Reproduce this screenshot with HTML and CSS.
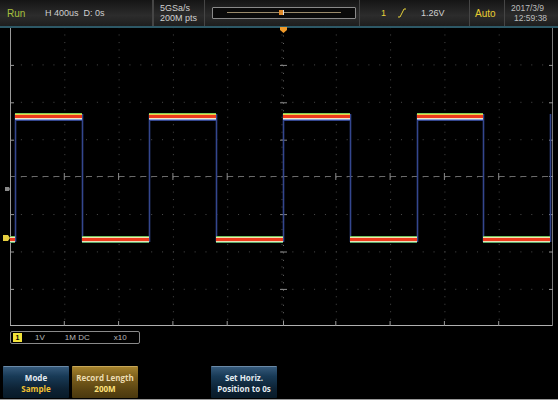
FILE: index.html
```html
<!DOCTYPE html>
<html>
<head>
<meta charset="utf-8">
<link rel="stylesheet" href="styles.css">
</head>
<body>
<div class="scope">
  <header class="topbar">
    <div class="cell run">Run</div>
    <div class="cell hdiv">H 400us&nbsp;&nbsp;D: 0s</div>
    <div class="cell rate"><span>5GSa/s</span><span>200M pts</span></div>
    <div class="cell nav">
      <div class="navbox">
        <div class="navline"></div>
        <div class="navmark"></div>
      </div>
    </div>
    <div class="cell trig">
      <span class="tch">1</span>
      <svg class="edge" width="10" height="10" viewBox="0 0 10 10"><path d="M1 9 H3 L7 1 H9" fill="none" stroke="#e6d23a" stroke-width="1"/></svg>
      <span class="tlvl">1.26V</span>
    </div>
    <div class="cell auto">Auto</div>
    <div class="cell date"><span>2017/3/9</span><span>12:59:38</span></div>
  </header>

  <div class="screen">
    <svg class="grid" width="558" height="301" viewBox="0 0 558 301">
      <defs>
        <pattern id="dots" x="10" y="1" width="10.86" height="37.4" patternUnits="userSpaceOnUse">
          <rect x="0" y="0" width="1" height="1" fill="#4a4a4a"/>
        </pattern>
        <pattern id="vdots" x="10" y="1" width="54.3" height="7.48" patternUnits="userSpaceOnUse">
          <rect x="0" y="0" width="1" height="1" fill="#4a4a4a"/>
        </pattern>
      </defs>
      <rect x="0" y="0" width="558" height="2" fill="#2d5866"/>
      <rect x="10" y="2" width="543" height="298" fill="url(#dots)"/>
      <rect x="10" y="2" width="543" height="298" fill="url(#vdots)"/>
      <!-- center horizontal -->
      <line x1="10" y1="150.5" x2="553" y2="150.5" stroke="#6a6a6a" stroke-width="1" stroke-dasharray="6 4.86"/>
      <g stroke="#8a8a8a" stroke-width="1">
        <line x1="64.3" y1="147" x2="64.3" y2="154"/>
        <line x1="118.6" y1="147" x2="118.6" y2="154"/>
        <line x1="172.9" y1="147" x2="172.9" y2="154"/>
        <line x1="227.2" y1="147" x2="227.2" y2="154"/>
        <line x1="335.8" y1="147" x2="335.8" y2="154"/>
        <line x1="390.1" y1="147" x2="390.1" y2="154"/>
        <line x1="444.4" y1="147" x2="444.4" y2="154"/>
        <line x1="498.7" y1="147" x2="498.7" y2="154"/>
      </g>
      <!-- center vertical -->
      <line x1="283.5" y1="2" x2="283.5" y2="300" stroke="#6a6a6a" stroke-width="1" stroke-dasharray="1 6.48"/>
      <g stroke="#8a8a8a" stroke-width="1">
        <line x1="280" y1="39.4" x2="287" y2="39.4"/>
        <line x1="280" y1="76.8" x2="287" y2="76.8"/>
        <line x1="280" y1="114.2" x2="287" y2="114.2"/>
        <line x1="280" y1="188.6" x2="287" y2="188.6"/>
        <line x1="280" y1="226" x2="287" y2="226"/>
        <line x1="280" y1="263.4" x2="287" y2="263.4"/>
      </g>
      <!-- border -->
      <line x1="10.5" y1="2" x2="10.5" y2="300" stroke="#9a9a9a"/>
      <line x1="10" y1="299.5" x2="553" y2="299.5" stroke="#b0b0b0"/>
      <line x1="552.5" y1="2" x2="552.5" y2="300" stroke="#7a7a7a"/>
      <g stroke="#9a9a9a">
        <line x1="64.3" y1="295" x2="64.3" y2="300"/>
        <line x1="118.6" y1="295" x2="118.6" y2="300"/>
        <line x1="172.9" y1="295" x2="172.9" y2="300"/>
        <line x1="227.2" y1="295" x2="227.2" y2="300"/>
        <line x1="283.5" y1="295" x2="283.5" y2="300"/>
        <line x1="335.8" y1="295" x2="335.8" y2="300"/>
        <line x1="390.1" y1="295" x2="390.1" y2="300"/>
        <line x1="444.4" y1="295" x2="444.4" y2="300"/>
        <line x1="498.7" y1="295" x2="498.7" y2="300"/>
        <line x1="10" y1="39.4" x2="14" y2="39.4"/>
        <line x1="10" y1="76.8" x2="14" y2="76.8"/>
        <line x1="10" y1="114.2" x2="14" y2="114.2"/>
        <line x1="10" y1="188.6" x2="14" y2="188.6"/>
        <line x1="10" y1="226" x2="14" y2="226"/>
        <line x1="10" y1="263.4" x2="14" y2="263.4"/>
        <line x1="549" y1="39.4" x2="553" y2="39.4"/>
        <line x1="549" y1="76.8" x2="553" y2="76.8"/>
        <line x1="549" y1="114.2" x2="553" y2="114.2"/>
        <line x1="549" y1="150.5" x2="553" y2="150.5"/>
        <line x1="549" y1="188.6" x2="553" y2="188.6"/>
        <line x1="549" y1="226" x2="553" y2="226"/>
        <line x1="549" y1="263.4" x2="553" y2="263.4"/>
      </g>

      <!-- vertical edges -->
      <g stroke="#34468e" stroke-width="1.6">
        <line x1="15.5" y1="88" x2="15.5" y2="216"/>
        <line x1="82.5" y1="88" x2="82.5" y2="216"/>
        <line x1="149.5" y1="88" x2="149.5" y2="216"/>
        <line x1="216.5" y1="88" x2="216.5" y2="216"/>
        <line x1="283.5" y1="88" x2="283.5" y2="216"/>
        <line x1="350.5" y1="88" x2="350.5" y2="216"/>
        <line x1="417.5" y1="88" x2="417.5" y2="216"/>
        <line x1="483.5" y1="88" x2="483.5" y2="216"/>
        <line x1="550.5" y1="88" x2="550.5" y2="216"/>
      </g>

      <!-- high levels -->
      <g id="hi">
        <g stroke-width="1">
          <path d="M15 87.5 H82 M149 87.5 H216 M283 87.5 H350 M417 87.5 H483" stroke="#7fcf5a"/>
          <path d="M15 88.5 H82 M149 88.5 H216 M283 88.5 H350 M417 88.5 H483" stroke="#f2d24a"/>
        </g>
        <path d="M15 90.5 H82 M149 90.5 H216 M283 90.5 H350 M417 90.5 H483" stroke="#ee3a1c" stroke-width="3"/>
        <path d="M15 92.5 H82 M149 92.5 H216 M283 92.5 H350 M417 92.5 H483" stroke="#f4e8c0" stroke-width="1"/>
        <path d="M15 93.5 H82 M149 93.5 H216 M283 93.5 H350 M417 93.5 H483" stroke="#8aa0d8" stroke-width="1"/>
        <path d="M15 94.5 H82 M149 94.5 H216 M283 94.5 H350 M417 94.5 H483" stroke="#34468e" stroke-width="1"/>
      </g>
      <!-- low levels -->
      <g>
        <path d="M10 210.5 H15 M82 210.5 H149 M216 210.5 H283 M350 210.5 H417 M483 210.5 H550" stroke="#6fbf5a" stroke-width="1"/>
        <path d="M10 211.5 H15 M82 211.5 H149 M216 211.5 H283 M350 211.5 H417 M483 211.5 H550" stroke="#f0e6b0" stroke-width="1"/>
        <path d="M10 213.5 H15 M82 213.5 H149 M216 213.5 H283 M350 213.5 H417 M483 213.5 H550" stroke="#ee3a1c" stroke-width="3"/>
        <path d="M10 215.5 H15 M82 215.5 H149 M216 215.5 H283 M350 215.5 H417 M483 215.5 H550" stroke="#e8e0b8" stroke-width="1"/>
        <path d="M10 216.5 H15 M82 216.5 H149 M216 216.5 H283 M350 216.5 H417 M483 216.5 H550" stroke="#5aa86a" stroke-width="1"/>
      </g>

      <!-- trigger marker top -->
      <path d="M280 1 H287 V4 L283.5 7 L280 4 Z" fill="#f09a2a"/>
      <!-- channel 1 ground marker -->
      <path d="M3 209 H8 L10 212 L8 215 H3 Z" fill="#e8d040"/>
      <!-- trigger level marker -->
      <path d="M5 161 H9 L10 163 L9 165 H5 Z" fill="#8a8a8a"/>
    </svg>
  </div>

  <div class="lower">
    <div class="chinfo">
      <span class="chnum">1</span>
      <span class="v">1V</span>
      <span class="imp">1M&nbsp;DC</span>
      <span class="probe">x10</span>
    </div>
    <div class="buttons">
      <div class="btn blue"><span>Mode</span><span class="val">Sample</span></div>
      <div class="btn gold"><span>Record Length</span><span class="val">200M</span></div>
      <div class="btn empty"></div>
      <div class="btn blue"><span>Set Horiz.</span><span>Position to 0s</span></div>
    </div>
  </div>
</div>
</body>
</html>
```

FILE: styles.css
```css
html, body {
  margin: 0;
  padding: 0;
  background: #000;
}
.scope {
  width: 558px;
  height: 400px;
  background: #000;
  display: flex;
  flex-direction: column;
  overflow: hidden;
  font-family: "Liberation Sans", Arial, sans-serif;
}
.topbar {
  height: 26px;
  display: flex;
  align-items: stretch;
  background: linear-gradient(#151515, #2c2c2c 60%, #1e1e1e);
  color: #d8d8d8;
  font-size: 9px;
}
.cell {
  display: flex;
  align-items: center;
  border-right: 1px solid #454545;
  box-sizing: border-box;
}
.run {
  width: 41px;
  padding-left: 7px;
  color: #a6c03e;
  font-size: 10px;
  border-right: none;
}
.hdiv {
  width: 112px;
  padding-left: 4px;
  color: #cfcfcf;
}
.rate {
  width: 52px;
  flex-direction: column;
  justify-content: center;
  align-items: flex-start;
  padding-left: 6px;
  line-height: 10px;
  color: #cfcfcf;
  border-left: 1px solid #454545;
}
.nav {
  width: 155px;
  padding-left: 7px;
}
.navbox {
  position: relative;
  width: 142px;
  height: 10px;
  border: 1px solid #8a8a8a;
  border-radius: 1px;
  background: #0a0a0a;
}
.navline {
  position: absolute;
  left: 14px;
  right: 14px;
  top: 4px;
  height: 1px;
  background: #9a8a6a;
}
.navmark {
  position: absolute;
  left: 66px;
  top: 2px;
  width: 4px;
  height: 5px;
  background: #e08a2a;
  border-right: 1px solid #ddd;
}
.trig {
  width: 110px;
  padding-left: 21px;
  gap: 11px;
}
.tch {
  color: #e6d23a;
  font-size: 9px;
}
.edge {
  display: block;
}
.tlvl {
  margin-left: 3px;
  color: #d0d0d0;
}
.auto {
  width: 35px;
  padding-left: 5px;
  color: #e8cc30;
  font-size: 10px;
}
.date {
  flex: 1;
  border-right: none;
  flex-direction: column;
  justify-content: center;
  align-items: flex-start;
  padding-left: 6px;
  line-height: 10px;
  color: #bdbdbd;
  font-size: 8.5px;
}
.date span:last-child {
  padding-left: 3px;
}
.screen {
  height: 301px;
}
.grid {
  display: block;
}
.lower {
  flex: 1;
  display: flex;
  flex-direction: column;
  justify-content: space-between;
  padding: 4px 0 1px 0;
  border-bottom: 1px solid #9a9a9a;
  box-sizing: border-box;
}
.chinfo {
  margin-left: 10px;
  width: 130px;
  height: 13px;
  box-sizing: border-box;
  border: 1px solid #8a8a8a;
  border-radius: 2px;
  display: flex;
  align-items: center;
  font-size: 8px;
  color: #b8b8b8;
  padding-left: 2px;
}
.chnum {
  width: 9px;
  height: 9px;
  background: #f3e33a;
  color: #000;
  font-size: 7px;
  font-weight: bold;
  display: flex;
  align-items: center;
  justify-content: center;
}
.v { margin-left: 13px; }
.imp { margin-left: 20px; }
.probe { margin-left: 24px; }
.buttons {
  display: flex;
  gap: 3px;
  padding-left: 3px;
}
.btn {
  width: 66px;
  height: 32px;
  box-sizing: border-box;
  display: flex;
  flex-direction: column;
  align-items: center;
  justify-content: center;
  font-family: "Open Sans", "DejaVu Sans", sans-serif;
  font-weight: bold;
  font-size: 8px;
  line-height: 11px;
  border-radius: 1px;
}
.btn.blue {
  background: linear-gradient(#35597a, #183a56 30%, #0d2234 70%, #081a28);
  border-top: 1px solid #6a8aa8;
  color: #e4ecf2;
}
.btn.gold {
  background: linear-gradient(#a4812c, #7a5e1c 35%, #5a4412 75%, #4a380e);
  border-top: 1px solid #c8a858;
  color: #ecdcb0;
}
.btn.gold .val {
  color: #ffe27a;
}
.btn.blue .val {
  color: #f2c230;
}
.btn.empty {
  width: 67px;
  visibility: hidden;
}
```
